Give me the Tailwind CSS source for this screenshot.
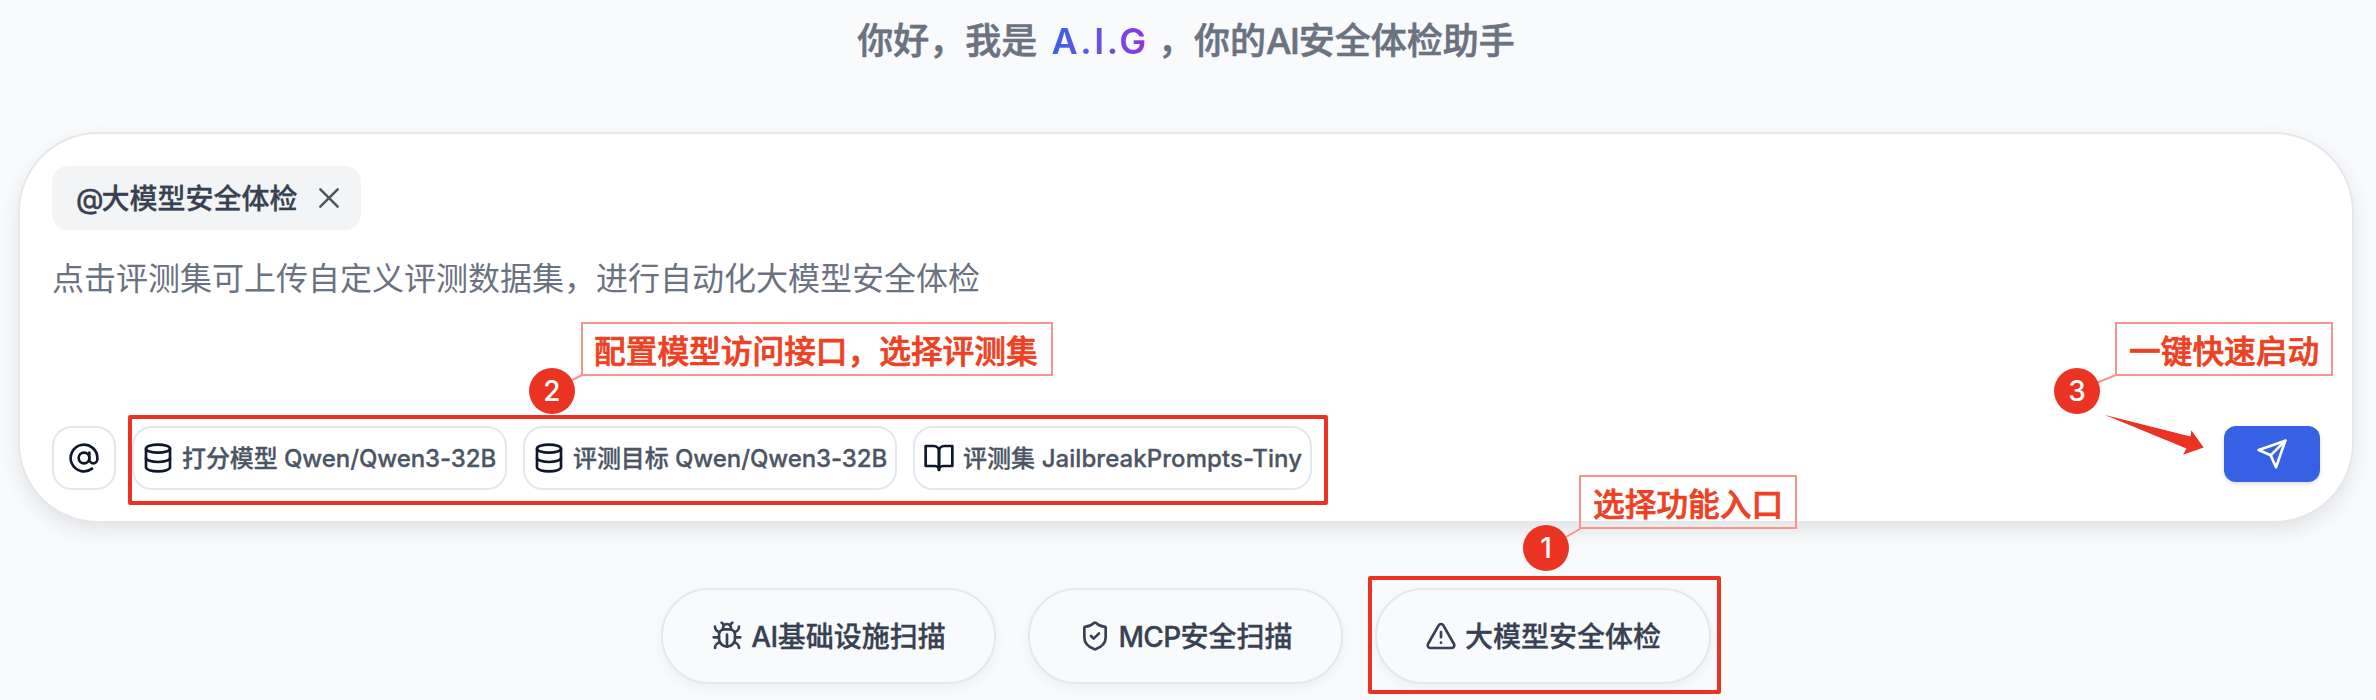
<!DOCTYPE html>
<html lang="zh-CN">
<head>
<meta charset="utf-8">
<title>A.I.G</title>
<script src="https://cdn.jsdelivr.net/npm/@tailwindcss/browser@4"></script>
</head>
<body class="relative w-[2376px] h-[700px] overflow-hidden bg-[#f9fafc] font-['Inter','Noto_Sans_CJK_SC',sans-serif] font-medium">
<svg class="hidden">
  <defs>
    <symbol id="database" viewBox="0 0 24 24"><ellipse cx="12" cy="5" rx="9" ry="3"/><path d="M3 5v14a9 3 0 0 0 18 0V5"/><path d="M3 12a9 3 0 0 0 18 0"/></symbol>
  </defs>
</svg>

<main class="flex flex-col pl-[18px] pr-[22px]">
  <h1 class="flex h-[80px] items-center justify-center whitespace-pre pt-[2px] text-[36px] leading-none text-[#6b7280]"><span class="[-webkit-text-stroke:0.6px_#6b7280]">你好，我是</span><span class="ml-[14px] mr-[9px] bg-linear-to-r from-[#3761e4] to-[#8b35e4] bg-clip-text font-semibold tracking-[2.6px] text-transparent leading-[48px]">A.I.G</span><span class="[-webkit-text-stroke:0.6px_#6b7280]">，你的<span class="tracking-[-1.3px]">AI</span>安全体检助手</span></h1>

  <section class="mt-[52px] flex h-[391px] flex-col rounded-[80px] border-2 border-[#e5e7eb] bg-white px-8 pt-8 shadow-[0_8px_20px_rgba(0,0,0,0.09)]">
    <div class="flex h-16 w-[309px] items-center rounded-2xl bg-[#f3f4f6] pl-6 text-[28px] leading-none text-[#374151]">
      <span class="pt-[2px] [-webkit-text-stroke:0.3px_#374151]"><span class="tracking-[-2px]">@</span>大模型安全体检</span>
      <svg class="ml-[15px] size-8 shrink-0" viewBox="0 0 24 24" fill="none" stroke="#4b5563" stroke-width="1.9" stroke-linecap="round"><path d="M18.5 5.5 5.5 18.5M5.5 5.5l13 13"/></svg>
    </div>
    <p class="mt-[25px] h-[47px] text-[32px] font-normal leading-[48px] text-[#6b7280]">点击评测集可上传自定义评测数据集，进行自动化大模型安全体检</p>
    <div class="mt-[124px] flex items-start justify-between">
      <div class="flex gap-4 text-[24px] leading-none text-[#4b5563]">
        <button class="flex size-16 items-center justify-center rounded-[20px] border-2 border-[#e2e8f0]">
          <svg class="size-8" viewBox="0 0 24 24" fill="none" stroke="#0f172a" stroke-width="2" stroke-linecap="round" stroke-linejoin="round"><circle cx="12" cy="12" r="4"/><path d="M16 8v5a3 3 0 0 0 6 0v-1a10 10 0 1 0-4 8"/></svg>
        </button>
        <button class="flex h-16 w-[375px] items-center gap-2 whitespace-nowrap rounded-[20px] border-2 border-[#e2e8f0] px-2">
          <svg class="size-8 shrink-0" fill="none" stroke="#0f172a" stroke-width="2" stroke-linecap="round" stroke-linejoin="round"><use href="#database"/></svg>
          <span class="pt-px tracking-[-0.08px] [-webkit-text-stroke:0.3px_#4b5563]">打分模型 Qwen/Qwen3-32B</span>
        </button>
        <button class="flex h-16 w-[374px] items-center gap-2 whitespace-nowrap rounded-[20px] border-2 border-[#e2e8f0] px-2">
          <svg class="size-8 shrink-0" fill="none" stroke="#0f172a" stroke-width="2" stroke-linecap="round" stroke-linejoin="round"><use href="#database"/></svg>
          <span class="pt-px tracking-[-0.08px] [-webkit-text-stroke:0.3px_#4b5563]">评测目标 Qwen/Qwen3-32B</span>
        </button>
        <button class="flex h-16 w-[399px] items-center gap-2 whitespace-nowrap rounded-[20px] border-2 border-[#e2e8f0] px-2">
          <svg class="size-8 shrink-0" viewBox="0 0 24 24" fill="none" stroke="#0f172a" stroke-width="2" stroke-linecap="round" stroke-linejoin="round"><path d="M2 3h6a4 4 0 0 1 4 4v14a3 3 0 0 0-3-3H2z"/><path d="M22 3h-6a4 4 0 0 0-4 4v14a3 3 0 0 1 3-3h7z"/></svg>
          <span class="pt-px tracking-[0.06px] [-webkit-text-stroke:0.3px_#4b5563]">评测集 JailbreakPrompts-Tiny</span>
        </button>
      </div>
      <button class="flex h-14 w-24 items-center justify-center rounded-xl bg-[#3761e4] shadow-[0_2px_4px_rgba(0,0,0,0.12)]">
        <svg class="size-8" viewBox="0 0 24 24" fill="none" stroke="#fff" stroke-width="2" stroke-linecap="round" stroke-linejoin="round"><path d="m22 2-7 20-4-9-9-4Z"/><path d="M22 2 11 13"/></svg>
      </button>
    </div>
  </section>

  <nav class="mt-[65px] flex justify-center gap-8 text-[28px] leading-none text-[#374151]">
    <button class="flex h-24 w-[335px] items-center justify-center gap-2 whitespace-nowrap rounded-full border-2 border-[#e5e7eb] bg-[#f9fafc] shadow-[0_4px_12px_rgba(0,0,0,0.05)]">
      <svg class="size-8 shrink-0" viewBox="0 0 24 24" fill="none" stroke="currentColor" stroke-width="2" stroke-linecap="round" stroke-linejoin="round"><path d="m8 2 1.88 1.88M14.12 3.88 16 2M9 7.13v-1a3.003 3.003 0 1 1 6 0v1"/><path d="M12 20c-3.3 0-6-2.7-6-6v-3a4 4 0 0 1 4-4h4a4 4 0 0 1 4 4v3c0 3.3-2.7 6-6 6"/><path d="M12 20v-9M6.53 9C4.6 8.8 3 7.1 3 5M6 13H2M3 21c0-2.1 1.7-3.9 3.8-4M20.97 5c0 2.1-1.6 3.8-3.5 4M22 13h-4M17.2 17c2.1.1 3.8 1.9 3.8 4"/></svg>
      <span class="pt-px [-webkit-text-stroke:0.3px_#374151]"><span class="tracking-[-0.5px]">AI</span>基础设施扫描</span>
    </button>
    <button class="flex h-24 w-[315px] items-center justify-center gap-2 whitespace-nowrap rounded-full border-2 border-[#e5e7eb] bg-[#f9fafc] shadow-[0_4px_12px_rgba(0,0,0,0.05)]">
      <svg class="size-8 shrink-0" viewBox="0 0 24 24" fill="none" stroke="currentColor" stroke-width="2" stroke-linecap="round" stroke-linejoin="round"><path d="M20 13c0 5-3.5 7.5-7.66 8.95a1 1 0 0 1-.67-.01C7.5 20.5 4 18 4 13V6a1 1 0 0 1 1-1c2 0 4.5-1.2 6.24-2.72a1.17 1.17 0 0 1 1.52 0C14.51 3.81 17 5 19 5a1 1 0 0 1 1 1z"/><path d="m9 12 2 2 4-4"/></svg>
      <span class="pt-px [-webkit-text-stroke:0.3px_#374151]"><span class="tracking-[-0.7px]">MCP</span>安全扫描</span>
    </button>
    <button class="flex h-24 w-[336px] items-center justify-center gap-2 whitespace-nowrap rounded-full border-2 border-[#e5e7eb] bg-[#f9fafc] shadow-[0_4px_12px_rgba(0,0,0,0.05)]">
      <svg class="size-8 shrink-0" viewBox="0 0 24 24" fill="none" stroke="currentColor" stroke-width="2" stroke-linecap="round" stroke-linejoin="round"><path d="m21.73 18-8-14a2 2 0 0 0-3.48 0l-8 14A2 2 0 0 0 4 21h16a2 2 0 0 0 1.73-3"/><path d="M12 9v4M12 17h.01"/></svg>
      <span class="pt-px [-webkit-text-stroke:0.3px_#374151]">大模型安全体检</span>
    </button>
  </nav>
</main>

<!-- Step annotations laid over the interface -->
<div class="absolute left-[128px] top-[415px] h-[90px] w-[1200px] rounded-[2px] border-4 border-[#eb3323]"></div>
<div class="absolute left-[1368px] top-[576px] h-[118px] w-[353px] rounded-[2px] border-4 border-[#eb3323]"></div>
<svg class="absolute left-0 top-0" width="2376" height="700" viewBox="0 0 2376 700" fill="none">
  <path d="M570 381 582 375M2096 383l20-8M1564 538l16-9" stroke="#f5958c" stroke-width="2"/>
  <path d="M2105 415 2190.5 436.5 2191.3 430.3 2203.7 447.6 2183 454.8 2186.5 448.5Z" fill="#eb3323"/>
</svg>
<div class="absolute left-[581px] top-[322px] flex h-[54px] w-[472px] items-center border-2 border-[#f5958c] pl-[11px] pt-[5px] whitespace-nowrap text-[31.7px] font-medium leading-none text-[#ee4023] [-webkit-text-stroke:0.7px_#ee4023]">配置模型访问接口，选择评测集</div>
<div class="absolute left-[2115px] top-[322px] flex h-[54px] w-[218px] items-center border-2 border-[#f5958c] pl-3 pt-[5px] whitespace-nowrap text-[31.7px] font-medium leading-none text-[#ee4023] [-webkit-text-stroke:0.7px_#ee4023]">一键快速启动</div>
<div class="absolute left-[1579px] top-[475px] flex h-[54px] w-[218px] items-center border-2 border-[#f5958c] pl-3 pt-[5px] whitespace-nowrap text-[31.7px] font-medium leading-none text-[#ee4023] [-webkit-text-stroke:0.7px_#ee4023]">选择功能入口</div>
<div class="absolute left-[529px] top-[368px] flex size-[46px] items-center justify-center rounded-full bg-[#eb3323] text-[28px] leading-none text-white">2</div>
<div class="absolute left-[2054px] top-[368px] flex size-[46px] items-center justify-center rounded-full bg-[#eb3323] text-[28px] leading-none text-white">3</div>
<div class="absolute left-[1523px] top-[525px] flex size-[46px] items-center justify-center rounded-full bg-[#eb3323] text-[28px] leading-none text-white">1</div>
</body>
</html>
